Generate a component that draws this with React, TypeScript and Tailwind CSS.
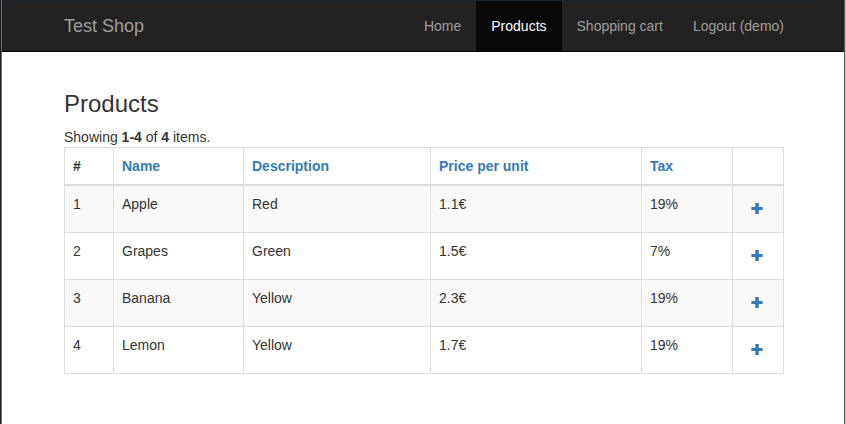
const navItems = [
  { label: "Home", active: false },
  { label: "Products", active: true },
  { label: "Shopping cart", active: false },
  { label: "Logout (demo)", active: false },
];

const products = [
  { id: 1, name: "Apple", description: "Red", price: "1.1€", tax: "19%" },
  { id: 2, name: "Grapes", description: "Green", price: "1.5€", tax: "7%" },
  { id: 3, name: "Banana", description: "Yellow", price: "2.3€", tax: "19%" },
  { id: 4, name: "Lemon", description: "Yellow", price: "1.7€", tax: "19%" },
];

const columns = ["Name", "Description", "Price per unit", "Tax"];

const headCell = "border-r border-b-2 border-[#dddddd] p-2 text-left font-bold";
const bodyCell = "h-[47px] border-r border-b border-[#dddddd] p-2 align-top";

function PlusIcon() {
  return (
    <svg width="12" height="11" viewBox="0 0 12 11" aria-hidden="true">
      <path d="M4.3 0h3.5v4h3.8v3H7.8v4H4.3V7H.4V4h3.9z" fill="currentColor" />
    </svg>
  );
}

export default function App() {
  return (
    <div className="flex min-h-screen bg-white font-['Liberation_Sans',Arial,sans-serif] text-sm leading-5 text-[#333333]">
      <div className="w-px bg-[#1c1f24]" />
      <div className="w-px bg-[#6b6b6b]" />
      <div className="min-w-0 flex-1">
        <header className="border-t border-b border-t-[#1f262b] border-b-[#080808] bg-[#222222] pr-[45px] pl-[62px]">
          <nav className="flex h-[50px] items-stretch justify-between text-[#9d9d9d]">
            <a href="#" className="flex items-center text-lg leading-5">
              Test Shop
            </a>
            <ul className="flex">
              {navItems.map((item) => (
                <li key={item.label} className="flex">
                  <a
                    href="#"
                    className={
                      item.active
                        ? "flex items-center bg-[#080808] px-[15px] text-white"
                        : "flex items-center px-[15px]"
                    }
                  >
                    {item.label}
                  </a>
                </li>
              ))}
            </ul>
          </nav>
        </header>
        <main className="pt-[39px] pr-[60px] pl-[62px]">
          <h1 className="mb-[10px] text-2xl leading-[26px]">Products</h1>
          <p>
            Showing <b>1-4</b> of <b>4</b> items.
          </p>
          <table className="w-full table-fixed border-separate border-spacing-0 border-t border-l border-[#dddddd]">
            <colgroup>
              <col className="w-[49px]" />
              <col className="w-[130px]" />
              <col className="w-[187px]" />
              <col className="w-[211px]" />
              <col className="w-[91px]" />
              <col className="w-[51px]" />
            </colgroup>
            <thead>
              <tr>
                <th className={headCell}>#</th>
                {columns.map((column) => (
                  <th key={column} className={headCell}>
                    <a href="#" className="text-[#337ab7]">
                      {column}
                    </a>
                  </th>
                ))}
                <td className={headCell} />
              </tr>
            </thead>
            <tbody>
              {products.map((product) => (
                <tr key={product.id} className="odd:bg-[#f9f9f9]">
                  <td className={bodyCell}>{product.id}</td>
                  <td className={bodyCell}>{product.name}</td>
                  <td className={bodyCell}>{product.description}</td>
                  <td className={bodyCell}>{product.price}</td>
                  <td className={bodyCell}>{product.tax}</td>
                  <td className="border-r border-b border-[#dddddd] p-0">
                    <button
                      type="button"
                      aria-label={`Add ${product.name} to cart`}
                      className="flex h-[46px] w-full items-start pt-[17px] pl-[18px] text-[#337ab7]"
                    >
                      <PlusIcon />
                    </button>
                  </td>
                </tr>
              ))}
            </tbody>
          </table>
        </main>
      </div>
      <div className="w-px bg-[#5a5a5a]" />
      <div className="w-px bg-[#c4c4c4]" />
    </div>
  );
}
